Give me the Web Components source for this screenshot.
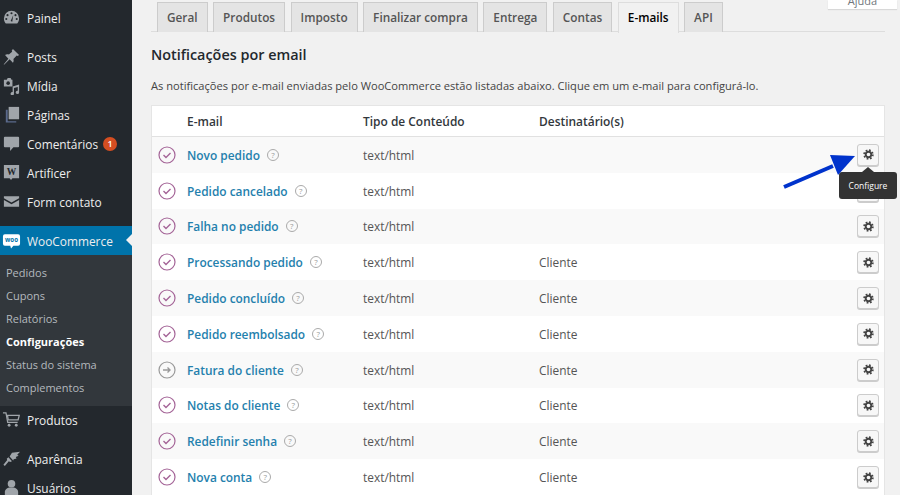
<!DOCTYPE html>
<html lang="pt-BR">
<head>
<meta charset="utf-8">
<title>E-mails</title>
<style>
  html, body { margin: 0; height: 495px; overflow: hidden; background: #f1f1f1; }
  body { display: flex; font-family: "Open Sans", sans-serif; color: #444; }
</style>
</head>
<body>
<wp-sidebar>
  <wp-menu-item label="Painel" icon="dashboard" style="margin-bottom:10px"></wp-menu-item>
  <wp-menu-item label="Posts" icon="pin"></wp-menu-item>
  <wp-menu-item label="Mídia" icon="media"></wp-menu-item>
  <wp-menu-item label="Páginas" icon="pages"></wp-menu-item>
  <wp-menu-item label="Comentários" icon="comment" badge="1"></wp-menu-item>
  <wp-menu-item label="Artificer" icon="artificer"></wp-menu-item>
  <wp-menu-item label="Form contato" icon="mail" style="margin-bottom:10px"></wp-menu-item>
  <wp-menu-item label="WooCommerce" icon="woo" current></wp-menu-item>
  <wp-submenu>
    <a>Pedidos</a>
    <a>Cupons</a>
    <a>Relatórios</a>
    <a class="on">Configurações</a>
    <a>Status do sistema</a>
    <a>Complementos</a>
  </wp-submenu>
  <wp-menu-item label="Produtos" icon="cart" style="margin:-1px 0 10px"></wp-menu-item>
  <wp-menu-item label="Aparência" icon="brush"></wp-menu-item>
  <wp-menu-item label="Usuários" icon="user"></wp-menu-item>
</wp-sidebar>

<settings-page>
  <help-tab slot="help">Ajuda</help-tab>
  <settings-tabs slot="tabs" active="E-mails" items="Geral,Produtos,Imposto,Finalizar compra,Entrega,Contas,E-mails,API"></settings-tabs>
  <h2 slot="title">Notificações por email</h2>
  <p slot="intro">As notificações por e-mail enviadas pelo WooCommerce estão listadas abaixo. Clique em um e-mail para configurá-lo.</p>
  <email-table slot="table">
    <email-row name="Novo pedido" tip></email-row>
    <email-row name="Pedido cancelado"></email-row>
    <email-row name="Falha no pedido"></email-row>
    <email-row name="Processando pedido" to="Cliente"></email-row>
    <email-row name="Pedido concluído" to="Cliente"></email-row>
    <email-row name="Pedido reembolsado" to="Cliente"></email-row>
    <email-row name="Fatura do cliente" to="Cliente" status="manual"></email-row>
    <email-row name="Notas do cliente" to="Cliente"></email-row>
    <email-row name="Redefinir senha" to="Cliente"></email-row>
    <email-row name="Nova conta" to="Cliente"></email-row>
  </email-table>
</settings-page>

<script>
// sidebar icons, roughly the dashicons shapes, 20x20 box
const ICONS = {
  dashboard: '<path d="M10 3a8 8 0 0 0-8 8c0 2 .8 3.900 2 5.300h12c1.200-1.400 2-3.300 2-5.300a8 8 0 0 0-8-8z"/><g fill="#23282d"><circle cx="10" cy="5.500" r="1.100"/><circle cx="5.800" cy="7.500" r="1.100"/><circle cx="14.200" cy="7.500" r="1.100"/><circle cx="4.500" cy="11.500" r="1.100"/><circle cx="15.500" cy="11.500" r="1.100"/><path d="M11.800 7.500l-2.700 6.200 1.700.7z"/></g>',
  pin: '<path d="M11.500 2l6.500 6.500-1.500 1-1-.5-3.500 3.500c.5 1.500.3 2.800-.5 4L8 13l-5.500 5.500-.8-.2 5-6-3.500-3.800c1.200-.8 2.500-1 4-.5L10.700 5l-.5-1z"/>',
  media: '<path d="M2 4h3l1-2h3l1 2h1v7H2z"/><circle cx="6.500" cy="7.500" r="1.900" fill="#23282d"/><path d="M18 9v8.200a1.800 1.800 0 1 1-1.400-1.700V11.500l-4 1v6a1.800 1.800 0 1 1-1.400-1.700V11z"/>',
  pages: '<path d="M7 2h11v13H7z"/><path d="M4 5h2v12h9v1.500H4z" fill="#5b6a8c"/>',
  comment: '<path d="M3 3h14a1 1 0 0 1 1 1v9a1 1 0 0 1-1 1h-5l-3.500 4v-4H3a1 1 0 0 1-1-1V4a1 1 0 0 1 1-1z"/>',
  artificer: '<path d="M2 2h16v14h-7l-1.500 2-1.500-2H2z"/><text x="10" y="13" font-size="10" font-weight="700" font-family="Liberation Serif, serif" text-anchor="middle" fill="#23282d">W</text>',
  mail: '<path d="M2 4.500h16v2L10 11 2 6.500z"/><path d="M2 8.500L10 13l8-4.500v7H2z"/>',
  woo: '<path d="M3 3.500h14a2 2 0 0 1 2 2v8a2 2 0 0 1-2 2h-5l-2.500 3-.8-3H3a2 2 0 0 1-2-2v-8a2 2 0 0 1 2-2z" fill="#fff"/><text x="10" y="11.500" font-size="6.500" font-weight="700" font-family="Open Sans, sans-serif" text-anchor="middle" fill="#0073aa">woo</text>',
  cart: '<path d="M1 3h3.200l1.800 10h10.500" fill="none" stroke="currentColor" stroke-width="1.300"/><path d="M5 5h14l-1.500 6H6zm1.600 1.300l.5 3.400h9.300l.9-3.400z" fill-rule="evenodd"/><circle cx="7.500" cy="16" r="1.500"/><circle cx="15" cy="16" r="1.500"/>',
  brush: '<path d="M10.500 4l8.500-1-3 3 1.500 1-3 1.500.8 1.500-3 .7-.5 1.500-3.800-4.200z"/><path d="M6.800 8.800l3.700 4-2 1-1.300-1-4.200 5-1.500-1.300 4-5-.5-1.200z"/>',
  user: '<circle cx="10" cy="6" r="4"/><path d="M3 18v-3.500C3 12 5.500 10.500 7.500 10h5c2 .5 4.500 2 4.500 4.500V18z"/>'
};

class WpSidebar extends HTMLElement {
  constructor() {
    super();
    this.attachShadow({ mode: "open" });
    this.shadowRoot.innerHTML = `
      <style>
        :host { display: block; flex: 0 0 132px; width: 132px; height: 495px; overflow: hidden; background: #23282d; padding-top: 3px; box-sizing: border-box; }
      </style>
      <slot></slot>
    `;
  }
}

class WpMenuItem extends HTMLElement {
  constructor() {
    super();
    this.attachShadow({ mode: "open" });
  }
  connectedCallback() {
    const current = this.hasAttribute("current");
    const badge = this.getAttribute("badge");
    const fill = current ? "#fff" : "#a0a5aa";
    this.shadowRoot.innerHTML = `
      <style>
        :host { display: flex; align-items: center; position: relative; height: 29px; font-size: 11.900px; line-height: 14px; color: #eee; background: ${current ? "#0073aa" : "transparent"}; }
        svg { width: 19px; height: 19px; margin: 0 6px 0 2px; flex: none; color: ${fill}; fill: ${fill}; }
        span { margin-right: 5px; }
        b { width: 14px; height: 14px; border-radius: 50%; background: #d54e21; color: #fff; font-size: 9px; line-height: 14px; text-align: center; font-weight: 600; }
        i { position: absolute; right: 0; top: 8px; border: 6px solid transparent; border-right-color: #f1f1f1; border-left-width: 0; }
      </style>
      <svg viewBox="0 0 20 20">${ICONS[this.getAttribute("icon")]}</svg>
      <span>${this.getAttribute("label")}</span>
      ${badge ? `<b>${badge}</b>` : ""}
      ${current ? "<i></i>" : ""}
    `;
  }
}

class WpSubmenu extends HTMLElement {
  constructor() {
    super();
    this.attachShadow({ mode: "open" });
    this.shadowRoot.innerHTML = `
      <style>
        :host { display: block; background: #32373c; padding: 6px 0 7px; font-size: 11px; }
        ::slotted(a) { display: block; height: 23px; line-height: 23px; padding-left: 6px; color: #b4b9be; }
        ::slotted(a.on) { color: #fff; font-weight: 700; }
      </style>
      <slot></slot>
    `;
  }
}

class SettingsPage extends HTMLElement {
  constructor() {
    super();
    this.attachShadow({ mode: "open" });
    this.shadowRoot.innerHTML = `
      <style>
        :host { display: block; position: relative; flex: 1; min-width: 0; height: 495px; box-sizing: border-box; padding: 0 15px 0 19px; background: #f1f1f1; }
        ::slotted(h2) { margin: 13px 0 0; height: 20px; line-height: 20px; font-size: 14.400px; font-weight: 600; color: #23282d; }
        ::slotted(p) { margin: 11px 0 0; height: 20px; line-height: 20px; font-size: 11.110px; color: #444; }
        ::slotted(email-table) { margin-top: 9px; }
      </style>
      <slot name="help"></slot>
      <slot name="tabs"></slot>
      <slot name="title"></slot>
      <slot name="intro"></slot>
      <slot name="table"></slot>
    `;
  }
}

class HelpTab extends HTMLElement {
  constructor() {
    super();
    this.attachShadow({ mode: "open" });
    this.shadowRoot.innerHTML = `
      <style>
        :host { position: absolute; top: 0; right: 3px; width: 69px; height: 9px; overflow: hidden; background: #fff; box-shadow: 0 1px 1px rgba(0,0,0,.1); font-size: 11px; color: #72777c; text-align: center; line-height: 9px; }
        span { display: block; margin-top: -6px; line-height: 14px; }
      </style>
      <span><slot></slot></span>
    `;
  }
}

class SettingsTabs extends HTMLElement {
  constructor() {
    super();
    this.attachShadow({ mode: "open" });
  }
  connectedCallback() {
    const active = this.getAttribute("active");
    const tabs = this.getAttribute("items").split(",").map(t =>
      `<a class="${t === active ? "on" : ""}">${t}</a>`).join("");
    this.shadowRoot.innerHTML = `
      <style>
        :host { display: flex; gap: 5.500px; height: 32px; box-sizing: border-box; padding-left: 6px; border-bottom: 1px solid #ddd; }
        a { display: block; box-sizing: border-box; height: 30px; margin-top: 2px; padding: 0 9px; border: 1px solid #ccc; border-bottom: 0; background: #e4e4e4; color: #555; font-size: 11.800px; font-weight: 600; line-height: 28px; white-space: nowrap; }
        a.on { height: 31px; background: #f1f1f1; color: #000; border-color: #ddd; }
      </style>
      ${tabs}
    `;
  }
}

class EmailTable extends HTMLElement {
  constructor() {
    super();
    this.attachShadow({ mode: "open" });
    this.shadowRoot.innerHTML = `
      <style>
        :host { display: block; background: #fff; border: 1px solid #e5e5e5; border-bottom: 0; box-sizing: border-box; height: 390px; overflow: visible; }
        header { display: grid; grid-template-columns: 35px 176px 176px 1fr; height: 30px; align-items: center; border-bottom: 1px solid #e1e1e1; font-size: 11.950px; font-weight: 600; color: #32373c; }
        header span:first-child { grid-column: 2; }
        ::slotted(email-row:nth-of-type(odd)) { background: #f9f9f9; }
      </style>
      <header><span>E-mail</span><span>Tipo de Conteúdo</span><span>Destinatário(s)</span></header>
      <slot></slot>
    `;
  }
}

class EmailRow extends HTMLElement {
  constructor() {
    super();
    this.attachShadow({ mode: "open" });
  }
  connectedCallback() {
    const manual = this.getAttribute("status") === "manual";
    const ring = manual ? "#999" : "#a46497";
    const mark = manual
      ? `<path d="M5 9h7M9.500 6.500L12 9l-2.500 2.500" fill="none" stroke="${ring}" stroke-width="1.400"/>`
      : `<path d="M5.500 9l2.500 2.500 4.500-4.500" fill="none" stroke="${ring}" stroke-width="1.400"/>`;
    this.shadowRoot.innerHTML = `
      <style>
        :host { display: grid; grid-template-columns: 35px 176px 176px 1fr 28px; align-items: center; height: 35.800px; font-size: 11.900px; color: #555; position: relative; }
        .status { width: 18px; height: 18px; margin-left: 6px; }
        .name { display: flex; align-items: center; gap: 7px; }
        a { color: #2480ad; font-weight: 600; font-size: 11.900px; white-space: nowrap; }
        .help { width: 10px; height: 10px; border: 1px solid #aaa; border-radius: 50%; color: #999; font-size: 8px; line-height: 10px; text-align: center; flex: none; }
        button { width: 22px; height: 22px; margin-left: 1px; padding: 0; border: 1px solid #ccc; border-radius: 3px; background: #f7f7f7; box-shadow: 0 1px 0 #ccc; display: flex; align-items: center; justify-content: center; }
        button svg { width: 11px; height: 11px; }
        .tip { position: absolute; left: 687px; top: 35px; z-index: 2; width: 58px; height: 27px; border-radius: 3px; background: #333; color: #fff; font-size: 8.500px; line-height: 27px; text-align: center; }
        .tip::before { content: ""; position: absolute; left: 23px; top: -5px; border: 6px solid transparent; border-top: 0; border-bottom: 5px solid #333; }
        .arrow { position: absolute; left: 631px; top: 17px; width: 78px; height: 40px; z-index: 3; overflow: visible; }
      </style>
      <svg class="status" viewBox="0 0 18 18"><circle cx="9" cy="9" r="8" fill="none" stroke="${ring}" stroke-width="1.200"/>${mark}</svg>
      <div class="name"><a>${this.getAttribute("name")}</a><span class="help">?</span></div>
      <span>text/html</span>
      <span>${this.getAttribute("to") || ""}</span>
      <button aria-label="Configure"><svg viewBox="0 0 12 12"><circle cx="6" cy="6" r="3" fill="none" stroke="#444" stroke-width="2"/><circle cx="6" cy="6" r="4.800" fill="none" stroke="#444" stroke-width="1.800" stroke-dasharray="1.900 1.870"/></svg></button>
      ${this.hasAttribute("tip") ? `<span class="tip">Configure</span>
      <svg class="arrow" viewBox="0 0 78 40"><path d="M1 33L50 12" stroke="#0033cc" stroke-width="4"/><path d="M47 1L72 2 55 21z" fill="#0033cc"/></svg>` : ""}
    `;
  }
}

customElements.define("wp-sidebar", WpSidebar);
customElements.define("wp-menu-item", WpMenuItem);
customElements.define("wp-submenu", WpSubmenu);
customElements.define("settings-page", SettingsPage);
customElements.define("help-tab", HelpTab);
customElements.define("settings-tabs", SettingsTabs);
customElements.define("email-table", EmailTable);
customElements.define("email-row", EmailRow);
</script>
</body>
</html>
